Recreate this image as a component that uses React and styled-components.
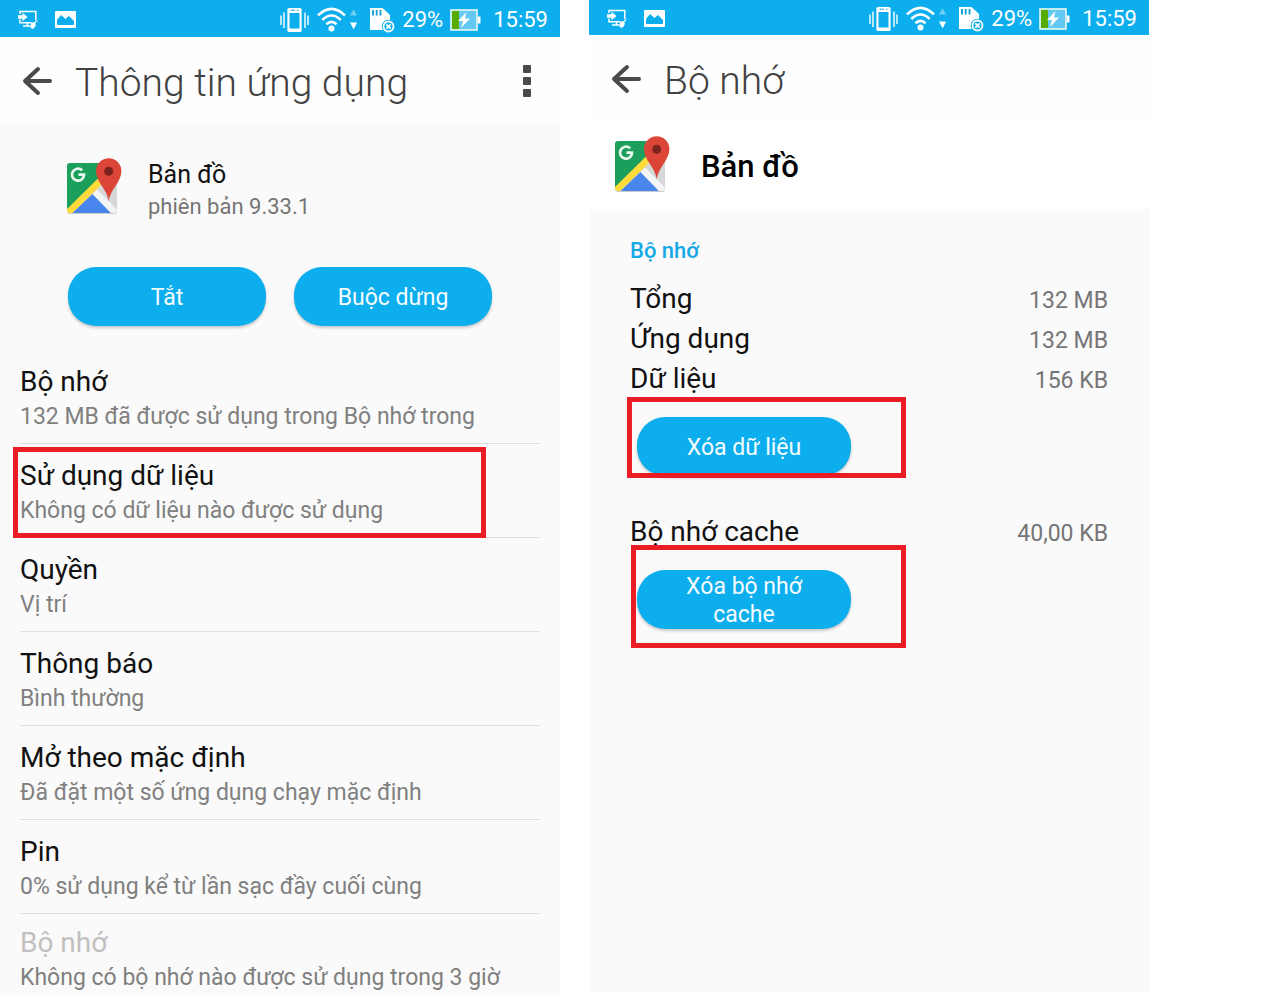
import React from "react";
import styled, { createGlobalStyle } from "styled-components";

const GlobalStyle = createGlobalStyle`
  * {
    box-sizing: border-box;
  }
  body {
    margin: 0;
    background: #fff;
    font-family: Roboto, "Noto Sans", sans-serif;
  }
  h1, h2, p, ul, dl, dd {
    margin: 0;
    padding: 0;
  }
  button {
    border: 0;
    padding: 0;
    background: none;
    font-family: inherit;
    cursor: pointer;
  }
  svg {
    display: block;
    flex-shrink: 0;
  }
`;

const Page = styled.main`
  display: flex;
  gap: 29px;
  height: 100vh;
  overflow: hidden;
`;

const Phone = styled.section`
  width: 43.75%;
  display: flex;
  flex-direction: column;
  margin-bottom: ${(props) => (props.$short ? "3px" : "0")};
`;

const StatusBar = styled.div`
  height: ${(props) => (props.$short ? "35px" : "37px")};
  flex-shrink: 0;
  display: flex;
  align-items: center;
  justify-content: space-between;
  padding: 2px 12px 0 18px;
  background: #0daeed;
  color: #fff;
`;

const StatusGroup = styled.div`
  display: flex;
  align-items: center;
  gap: ${(props) => props.$gap};
`;

const StatusText = styled.span`
  font-size: 22px;
  line-height: 24px;
  padding-top: 1px;
`;

const Clock = styled(StatusText)`
  margin-left: 5px;
`;

const Toolbar = styled.header`
  height: 87px;
  flex-shrink: 0;
  display: flex;
  align-items: center;
  padding: 0 26px 0 22px;
  background: #fefefe;
`;

const IconButton = styled.button`
  height: 36px;
  display: flex;
  align-items: center;
`;

const Title = styled.h1`
  flex: 1;
  margin-left: 23px;
  padding-top: 4px;
  font-size: 39px;
  line-height: 48px;
  font-weight: 300;
  color: #424242;
`;

const Body = styled.div`
  flex: 1;
  min-height: 0;
  background: #fafafa;
`;

const AppInfo = styled.div`
  display: flex;
  gap: 24px;
  padding: 33px 66px 0;
`;

const AppText = styled.div`
  padding-top: 2px;
`;

const AppName = styled.h2`
  font-size: 25px;
  line-height: 32px;
  font-weight: 400;
  color: #111;
`;

const AppVersion = styled.p`
  font-size: 22px;
  line-height: 32px;
  color: #757575;
`;

const Actions = styled.div`
  display: flex;
  gap: 28px;
  padding: 44px 68px 24px;
`;

const PillButton = styled.button`
  flex: 1;
  height: 59px;
  padding-top: 2px;
  border-radius: 28px;
  background: #0daeed;
  box-shadow: 0 2px 3px rgba(0, 0, 0, 0.2);
  color: #f4fcff;
  font-size: 23px;
  line-height: 28px;
`;

const ClearButton = styled(PillButton)`
  display: block;
  width: 214px;
  padding: 2px 40px 0;
`;

const List = styled.ul`
  padding: 0 20px;
  list-style: none;
`;

const Row = styled.li`
  position: relative;
  padding: 16px 0 7px;
  border-bottom: 1px solid #dedede;
  &:last-child {
    padding-top: 13px;
    border-bottom: 0;
  }
`;

const RowTitle = styled.p`
  font-size: 28px;
  line-height: 32px;
  color: ${(props) => (props.$disabled ? "#c0c0c0" : "#111")};
`;

const RowSummary = styled.p`
  font-size: 23px;
  line-height: 38px;
  color: #808080;
`;

// red frame laid over the part the reader should tap
const Mark = styled.span`
  position: absolute;
  top: ${(props) => props.$top};
  right: ${(props) => props.$right};
  bottom: ${(props) => props.$bottom};
  left: ${(props) => props.$left};
  border: 5px solid #ea1c24;
  pointer-events: none;
`;

const AppHeader = styled.div`
  height: 87px;
  flex-shrink: 0;
  display: flex;
  gap: 29px;
  padding: 13px 25px 0;
  background: #fff;
`;

const AppHeaderName = styled.h2`
  font-size: 31px;
  line-height: 64px;
  font-weight: 500;
  color: #000;
`;

const Storage = styled(Body)`
  padding: 26px 41px 0;
`;

const SectionTitle = styled.h2`
  margin-bottom: 12px;
  font-size: 22px;
  line-height: 32px;
  font-weight: 500;
  color: #14a9e6;
`;

const SizeRow = styled.div`
  display: flex;
  justify-content: space-between;
  height: 40px;
  line-height: 40px;
  dt {
    font-size: 28px;
    color: #111;
  }
  dd {
    padding-top: 2px;
    font-size: 23px;
    color: #757575;
  }
`;

const ClearBox = styled.div`
  position: relative;
  margin: 18px 0 36px;
  padding-left: 7px;
`;

const BackIcon = () => (
  <svg width="30" height="30" viewBox="0 0 30 30" fill="none" stroke="#4a4a4a" strokeWidth="4" strokeLinecap="round" strokeLinejoin="round">
    <path d="M28 15H4M16 3L3 15L16 27" />
  </svg>
);

const MoreIcon = () => (
  <svg width="14" height="34" viewBox="0 0 14 34" fill="#4a4a4a">
    <rect x="3" y="1" width="8" height="8" rx="1" />
    <rect x="3" y="13" width="8" height="8" rx="1" />
    <rect x="3" y="25" width="8" height="8" rx="1" />
  </svg>
);

const ScreenIcon = () => (
  <svg width="20" height="19" viewBox="0 0 20 19" fill="none" stroke="#fff">
    <path d="M2 4V1.5H17.8V10" strokeWidth="1.5" />
    <path d="M2 9.5V12.8H13" strokeWidth="1.5" />
    <path d="M0 5.3H4.5V2.8L9.5 7L4.5 11.2V8.7H0Z" fill="#fff" stroke="none" />
    <path d="M9.5 13V15.5M5 16H12" strokeWidth="1.6" />
    <ellipse cx="15" cy="15.5" rx="2.4" ry="3.2" transform="rotate(25 15 15.5)" fill="#fff" stroke="none" />
    <path d="M16.5 13L19.3 10.3M12.5 12.3L15 14.5" strokeWidth="1.1" />
  </svg>
);

const PictureIcon = () => (
  <svg width="21" height="17" viewBox="0 0 21 17">
    <rect width="21" height="17" rx="1" fill="#fff" />
    <path d="M2.5 13.5V9L6 4.5L10.5 8.5L14 5.5L18.5 10V13.5Z" fill="#0daeed" stroke="#0daeed" strokeLinejoin="round" />
  </svg>
);

const VibrateIcon = () => (
  <svg width="29" height="26" viewBox="0 0 29 26" fill="none" stroke="#fff">
    <path d="M1 8.5V18M4 5.5V21M25 5.5V21M28 8.5V18" strokeWidth="1.4" />
    <rect x="7.4" y="1" width="14.2" height="24" rx="1.5" fill="#fff" stroke="none" />
    <rect x="9.5" y="6" width="10" height="15.5" fill="#0daeed" stroke="none" />
    <path d="M10.5 3.2H15M17 3.2H18.5" stroke="#0daeed" strokeWidth="1" />
  </svg>
);

const WifiIcon = () => (
  <svg width="40" height="26" viewBox="0 0 40 26" fill="none" stroke="#fff" strokeWidth="2.6">
    <path d="M1 8.4Q14.5 -4.5 28 8.4" />
    <path d="M5.3 13Q14.5 4 23.7 13" />
    <path d="M9.4 17.3Q14.5 12.4 19.6 17.3" />
    <circle cx="14.5" cy="21.6" r="3" fill="#fff" stroke="none" />
    <path d="M33 8.5L36.7 2.5L40 8.5Z" fill="#6fcff5" stroke="none" />
    <path d="M33 15.5L36.7 22.5L40 15.5Z" fill="#fff" stroke="none" />
  </svg>
);

const SdCardIcon = () => (
  <svg width="25" height="26" viewBox="0 0 25 26">
    <path d="M0 1H12.5L20 8V23H0Z" fill="#fff" />
    <path d="M3 3V8.5M6.7 3V8.5M10.5 3V8.5" stroke="#0d9ed8" strokeWidth="1.8" />
    <circle cx="18.5" cy="19.5" r="6.8" fill="#0daeed" />
    <circle cx="18.5" cy="19.5" r="5" fill="none" stroke="#fff" strokeWidth="1.8" />
    <path d="M16.3 17.3L20.7 21.7M20.7 17.3L16.3 21.7" stroke="#fff" strokeWidth="1.8" />
  </svg>
);

const BatteryIcon = () => (
  <svg width="31" height="22" viewBox="0 0 31 22">
    <rect x="1" y="1" width="26" height="20" fill="#63c9f3" stroke="#e9f8f0" strokeWidth="1.6" />
    <rect x="2" y="2" width="7" height="18" fill="#57ab00" />
    <rect x="28" y="7.5" width="2.5" height="7" fill="#fff" />
    <path d="M16.5 3L8 12H13L11 19L20 9.5H15Z" fill="#fff" />
  </svg>
);

const MapsIcon = () => (
  <svg width="58" height="58" viewBox="0 0 58 58">
    <rect x="1" y="7" width="50" height="50" rx="3" fill="#c9cacc" />
    <rect x="1" y="6" width="50" height="50" rx="3" fill="#d6d7d9" />
    <path d="M4 6H48L1 53V9Q1 6 4 6Z" fill="#1c9f5a" />
    <path d="M31.5 22L36 27L6.5 56H4Q1 56 1 53V52Z" fill="#fddb3b" />
    <path d="M26.5 37L45 56H6.5Z" fill="#4886ee" />
    <path d="M26.5 37L31 32.5L51 52.5V53Q51 56 48 56H45Z" fill="#f3f4f5" />
    <path d="M16.2 13.4A6 6 0 1 0 18 17.7H12.5" fill="none" stroke="#eaf7ef" strokeWidth="2.7" />
    <path d="M42.7 44C41.5 33 30 25 30 14A12.7 12.7 0 0 1 55.4 14C55.4 25 44 33 42.7 44Z" fill="#dc4639" />
    <circle cx="42.7" cy="14.3" r="4.5" fill="#7d231d" />
  </svg>
);

const rows = [
  { title: "Bộ nhớ", summary: "132 MB đã được sử dụng trong Bộ nhớ trong" },
  { title: "Sử dụng dữ liệu", summary: "Không có dữ liệu nào được sử dụng", marked: true },
  { title: "Quyền", summary: "Vị trí" },
  { title: "Thông báo", summary: "Bình thường" },
  { title: "Mở theo mặc định", summary: "Đã đặt một số ứng dụng chạy mặc định" },
  { title: "Pin", summary: "0% sử dụng kể từ lần sạc đầy cuối cùng" },
  { title: "Bộ nhớ", summary: "Không có bộ nhớ nào được sử dụng trong 3 giờ", disabled: true },
];

const sizes = [
  { label: "Tổng", value: "132 MB" },
  { label: "Ứng dụng", value: "132 MB" },
  { label: "Dữ liệu", value: "156 KB" },
];

const Status = ({ short }) => (
  <StatusBar $short={short}>
    <StatusGroup $gap="17px">
      <ScreenIcon />
      <PictureIcon />
    </StatusGroup>
    <StatusGroup $gap="13px">
      <StatusGroup $gap="8px">
        <VibrateIcon />
        <WifiIcon />
      </StatusGroup>
      <StatusGroup $gap="7px">
        <SdCardIcon />
        <StatusText>29%</StatusText>
        <BatteryIcon />
        <Clock>15:59</Clock>
      </StatusGroup>
    </StatusGroup>
  </StatusBar>
);

const AppDetails = () => (
  <Phone>
    <Status />
    <Toolbar>
      <IconButton aria-label="Quay lại">
        <BackIcon />
      </IconButton>
      <Title>Thông tin ứng dụng</Title>
      <IconButton aria-label="Tùy chọn khác">
        <MoreIcon />
      </IconButton>
    </Toolbar>
    <Body>
      <AppInfo>
        <MapsIcon />
        <AppText>
          <AppName>Bản đồ</AppName>
          <AppVersion>phiên bản 9.33.1</AppVersion>
        </AppText>
      </AppInfo>
      <Actions>
        <PillButton>Tắt</PillButton>
        <PillButton>Buộc dừng</PillButton>
      </Actions>
      <List>
        {rows.map((row, index) => (
          <Row key={index}>
            <RowTitle $disabled={row.disabled}>{row.title}</RowTitle>
            <RowSummary>{row.summary}</RowSummary>
            {row.marked && <Mark $top="3px" $right="54px" $bottom="-1px" $left="-7px" />}
          </Row>
        ))}
      </List>
    </Body>
  </Phone>
);

const AppStorage = () => (
  <Phone $short>
    <Status short />
    <Toolbar>
      <IconButton aria-label="Quay lại">
        <BackIcon />
      </IconButton>
      <Title>Bộ nhớ</Title>
    </Toolbar>
    <AppHeader>
      <MapsIcon />
      <AppHeaderName>Bản đồ</AppHeaderName>
    </AppHeader>
    <Storage>
      <SectionTitle>Bộ nhớ</SectionTitle>
      <dl>
        {sizes.map((size) => (
          <SizeRow key={size.label}>
            <dt>{size.label}</dt>
            <dd>{size.value}</dd>
          </SizeRow>
        ))}
      </dl>
      <ClearBox>
        <ClearButton>Xóa dữ liệu</ClearButton>
        <Mark $top="-20px" $right="202px" $bottom="-2px" $left="-3px" />
      </ClearBox>
      <dl>
        <SizeRow>
          <dt>Bộ nhớ cache</dt>
          <dd>40,00 KB</dd>
        </SizeRow>
      </dl>
      <ClearBox>
        <ClearButton>Xóa bộ nhớ cache</ClearButton>
        <Mark $top="-25px" $right="202px" $bottom="-19px" $left="1px" />
      </ClearBox>
    </Storage>
  </Phone>
);

const App = () => {
  return (
    <>
      <GlobalStyle />
      <Page>
        <AppDetails />
        <AppStorage />
      </Page>
    </>
  );
};

export default App;
